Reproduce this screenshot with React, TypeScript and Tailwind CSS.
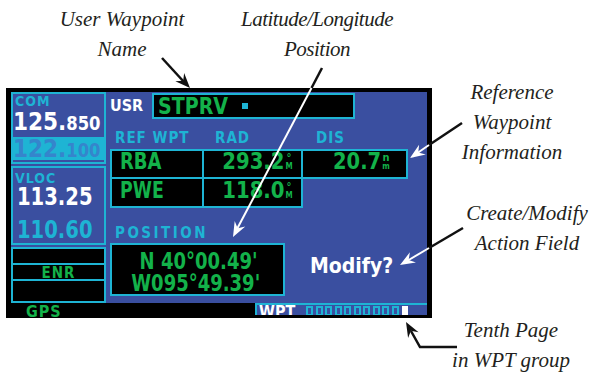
const NUM = "font-['DejaVu_Sans_Condensed','DejaVu_Sans',sans-serif] font-bold";
const LBL = "font-['DejaVu_Sans_Condensed','DejaVu_Sans',sans-serif] font-bold";

type Pt = [number, number];

// notched arrow head, tip at `to`, pointing away from `from`
function head(to: Pt, from: Pt, len = 15, w = 6) {
  const dx = to[0] - from[0];
  const dy = to[1] - from[1];
  const d = Math.hypot(dx, dy);
  const ux = dx / d;
  const uy = dy / d;
  const bx = to[0] - ux * len;
  const by = to[1] - uy * len;
  const mx = to[0] - ux * (len - 5);
  const my = to[1] - uy * (len - 5);
  return `${to[0]},${to[1]} ${bx - uy * w},${by + ux * w} ${mx},${my} ${bx + uy * w},${by - ux * w}`;
}

function Arrows() {
  return (
    <svg className="pointer-events-none absolute left-0 top-0" width="590" height="378">
      {/* user waypoint name */}
      <line x1={162} y1={58} x2={184} y2={82} stroke="#111" strokeWidth={2.5} />
      <polygon points={head([190, 88], [162, 58])} fill="#111" />
      {/* lat/lon */}
      <line x1={322} y1={68} x2={311.5} y2={88} stroke="#111" strokeWidth={2.5} />
      <line x1={311.5} y1={88} x2={237} y2={229} stroke="#fff" strokeWidth={2} />
      <polygon points={head([233, 237], [322, 68])} fill="#fff" />
      {/* reference waypoint */}
      <line x1={462} y1={123} x2={429} y2={145} stroke="#111" strokeWidth={2.5} />
      <line x1={429} y1={145} x2={416} y2={154} stroke="#fff" strokeWidth={2} />
      <polygon points={head([410, 158], [462, 123])} fill="#fff" />
      {/* create / modify */}
      <line x1={463} y1={228} x2={429} y2={248} stroke="#111" strokeWidth={2.5} />
      <line x1={429} y1={248} x2={407} y2={261} stroke="#fff" strokeWidth={2} />
      <polygon points={head([400, 265], [463, 228])} fill="#fff" />
      {/* tenth page */}
      <polyline points="457,347 420,347 411,331" fill="none" stroke="#111" strokeWidth={2.5} />
      <polygon points={head([406, 322], [420, 347])} fill="#111" />
    </svg>
  );
}

function Callout({ className, lines }: { className: string; lines: string[] }) {
  return (
    <div
      className={`absolute text-center font-['Liberation_Serif',serif] text-[21px] italic leading-[30px] text-[#231f20] ${className}`}
    >
      {lines.map((l) => (
        <div key={l}>{l}</div>
      ))}
    </div>
  );
}

function Unit({ top, bottom }: { top: string; bottom: string }) {
  return (
    <span className={`mb-[3px] flex w-[10px] flex-col items-center ${LBL}`}>
      <span className="h-[10px] text-[11px] leading-[10px]">{top}</span>
      <span className="h-[7px] text-[8px] leading-[7px]">{bottom}</span>
    </span>
  );
}

function LeftColumn() {
  return (
    <div className="flex w-[95px] shrink-0 flex-col gap-[2px]">
      <div className="h-[72px] shrink-0 border-2 border-[#1eb4d4]">
        <div className={`h-[14px] pl-[2px] text-[14px] leading-[14px] tracking-[1px] text-[#1eb4d4] ${LBL}`}>COM</div>
        <div className={`h-[27px] text-[25px] leading-[27px] text-white ${NUM}`}>
          <span className="inline-block origin-left scale-x-[0.96]">
            125.<span className="text-[19px]">850</span>
          </span>
        </div>
        <div className={`mt-[2px] h-[23px] bg-[#1eb4d4] text-[25px] leading-[23px] text-[#3585cc] ${NUM}`}>
          <span className="inline-block origin-left scale-x-[0.96]">
            122.<span className="text-[19px]">100</span>
          </span>
        </div>
      </div>
      <div className="h-[79px] shrink-0 border-2 border-[#1eb4d4]">
        <div className={`mt-[3px] h-[14px] pl-[2px] text-[14px] leading-[14px] tracking-[1px] text-[#1eb4d4] ${LBL}`}>VLOC</div>
        <div className={`h-[24px] pl-[4px] text-[25px] leading-[24px] text-white ${NUM}`}>
          <span className="inline-block origin-left scale-x-[0.87]">113.25</span>
        </div>
        <div className={`mt-[9px] h-[24px] pl-[4px] text-[25px] leading-[24px] text-[#1eb4d4] ${NUM}`}>
          <span className="inline-block origin-left scale-x-[0.87]">110.60</span>
        </div>
      </div>
      <div className="flex h-[56px] shrink-0 flex-col divide-y-2 divide-[#1eb4d4] border-2 border-[#1eb4d4] bg-black">
        <div className="h-[16px]" />
        <div className={`h-[16px] text-center text-[15px] leading-[16px] tracking-[1px] text-[#13b24a] ${LBL}`}>ENR</div>
        <div className="h-[16px]" />
      </div>
    </div>
  );
}

function Cell({ className, children }: { className: string; children?: React.ReactNode }) {
  return (
    <div
      className={`flex h-full items-end border-2 border-[#1eb4d4] bg-black pb-[4px] text-[23px] leading-none text-[#13b24a] ${NUM} ${className}`}
    >
      {children}
    </div>
  );
}

function WaypointPage() {
  return (
    <div className="flex flex-1 flex-col pl-[4px]">
      <div className="mt-[1px] flex h-[26px] items-center">
        <span className={`w-[42px] text-[16px] leading-[16px] text-white ${LBL}`}>USR</span>
        <div className="flex h-[26px] w-[203px] items-center border-2 border-[#1eb4d4] bg-black pl-[4px]">
          <span className={`inline-block origin-left scale-x-[0.92] text-[23px] leading-none text-[#13b24a] ${NUM}`}>STPRV</span>
          <span className="ml-[8px] h-[6px] w-[6px] bg-[#1eb4d4]" />
        </div>
      </div>

      <div className={`mt-[12px] flex h-[15px] pl-[5px] text-[15px] leading-[15px] tracking-[1px] text-[#1eb4d4] ${LBL}`}>
        <span className="w-[100px]">REF WPT</span>
        <span className="w-[101px]">RAD</span>
        <span>DIS</span>
      </div>

      <div className="mt-[3px] flex h-[30px]">
        <Cell className="w-[94px] pl-[8px]">
          <span className="inline-block origin-left scale-x-[0.87]">RBA</span>
        </Cell>
        <Cell className="-ml-[2px] w-[101px] justify-end pr-[7px]">
          <span className="inline-block origin-right scale-x-[0.95]">293.2</span>
          <Unit top="°" bottom="M" />
        </Cell>
        <Cell className="-ml-[2px] w-[107px] justify-end pr-[15px]">
          <span className="inline-block origin-right scale-x-[0.94]">20.7</span>
          <Unit top="n" bottom="m" />
        </Cell>
      </div>
      <div className="-mt-[2px] flex h-[31px]">
        <Cell className="w-[94px] pl-[8px]">
          <span className="inline-block origin-left scale-x-[0.84]">PWE</span>
        </Cell>
        <Cell className="-ml-[2px] w-[101px] justify-end pr-[7px]">
          <span className="inline-block origin-right scale-x-[0.95]">118.0</span>
          <Unit top="°" bottom="M" />
        </Cell>
      </div>

      <div className={`mt-[18px] h-[15px] pl-[5px] text-[15px] leading-[15px] tracking-[2.5px] text-[#1eb4d4] ${LBL}`}>POSITION</div>

      <div className="mt-[2px] flex items-start">
        <div
          className={`h-[53px] w-[175px] border-2 border-[#1eb4d4] bg-black pr-[26px] pt-[5px] text-right text-[23px] leading-[22px] text-[#13b24a] ${NUM}`}
        >
          <div>
            <span className="inline-block origin-right scale-x-[0.87]">N 40°00.49'</span>
          </div>
          <div>
            <span className="inline-block origin-right scale-x-[0.87]">W095°49.39'</span>
          </div>
        </div>
        <div className={`ml-[25px] mt-[13px] text-[21px] leading-[21px] text-white ${LBL}`}>Modify?</div>
      </div>
    </div>
  );
}

function StatusBar() {
  return (
    <div className="flex h-[14px] shrink-0 overflow-hidden">
      <div className={`w-[244px] bg-black pl-[15px] pt-[1px] text-[16px] leading-[16px] tracking-[1px] text-[#13b24a] ${LBL}`}>GPS</div>
      <div className="flex h-[12px] flex-1 items-start overflow-hidden border-l-2 border-t-2 border-[#1eb4d4] bg-[#3a4fa0]">
        <span className={`pl-[2px] text-[16px] leading-[14px] text-white ${LBL}`}>WPT</span>
        <div className="ml-[11px] mt-[1px] flex gap-[2.5px]">
          {Array.from({ length: 10 }).map((_, i) => (
            <span key={i} className="h-[10px] w-[7px] border-2 border-[#1eb4d4]" />
          ))}
          <span className="ml-[1px] h-[10px] w-[6px] bg-white" />
        </div>
      </div>
    </div>
  );
}

function Screen() {
  return (
    <div className="flex h-[230px] w-[426px] flex-col overflow-hidden bg-black px-[5px] pt-[4px]">
      <div className="flex h-[211px] shrink-0 bg-[#3a4fa0]">
        <LeftColumn />
        <WaypointPage />
      </div>
      <StatusBar />
    </div>
  );
}

export default function App() {
  return (
    <div className="relative h-[378px] w-[590px] overflow-hidden bg-white">
      <div className="pl-[6px] pt-[88px]">
        <Screen />
      </div>
      <Callout className="left-[42px] top-[4px] w-[160px]" lines={["User Waypoint", "Name"]} />
      <Callout className="left-[222px] top-[4px] w-[190px] tracking-[-0.5px]" lines={["Latitude/Longitude", "Position"]} />
      <Callout className="left-[442px] top-[77px] w-[140px]" lines={["Reference", "Waypoint", "Information"]} />
      <Callout className="left-[457px] top-[198px] w-[140px]" lines={["Create/Modify", "Action Field"]} />
      <Callout className="left-[441px] top-[315px] w-[140px]" lines={["Tenth Page", "in WPT group"]} />
      <Arrows />
    </div>
  );
}
